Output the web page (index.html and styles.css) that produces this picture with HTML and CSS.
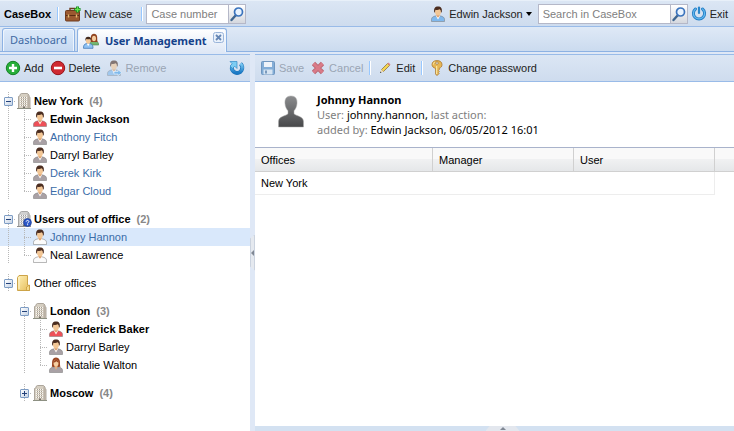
FILE: index.html
```html
<!DOCTYPE html>
<html lang="en">
<head>
<meta charset="utf-8">
<title>CaseBox - User Management</title>
<link rel="stylesheet" href="styles.css">
</head>
<body>
<svg class="defs" aria-hidden="true">
  <defs>
    <linearGradient id="gfloor" x2="0" y2="1"><stop offset="0" stop-color="#8b8c8e"/><stop offset="1" stop-color="#47484a"/></linearGradient>
    <linearGradient id="gfolder" x2="1" y2="1"><stop offset="0" stop-color="#fff0b5"/><stop offset="1" stop-color="#e5bd5a"/></linearGradient>
    <linearGradient id="gblue" x2="0" y2="1"><stop offset="0" stop-color="#7ccbf5"/><stop offset="1" stop-color="#1878c4"/></linearGradient>
  </defs>
  <symbol id="person" viewBox="0 0 16 16">
    <path d="M1.500 15.500v-2.200c0-2 1.700-2.800 4.500-3.500h4c2.800.7 4.500 1.500 4.500 3.500v2.200z" fill="currentColor" stroke="#777" stroke-opacity=".65" stroke-width=".8"/>
    <path d="M5.700 9.600 8 13.500l2.300-3.900z" fill="#fff"/>
    <path d="M6.500 8h3v2L8 11.800 6.500 10z" fill="#dda06d"/>
    <ellipse cx="8" cy="5.500" rx="3" ry="4" fill="#f3c796"/>
    <path d="M4.300 6.500C3.500 2.500 5 .6 8 .6s4.500 1.900 3.700 5.900l-.8-.3c.1-1.600-.5-2.500-1.300-2.900-1.200.7-3 .7-3.900.4-.6.700-.7 1.500-.6 2.500z" fill="#4b2d20"/>
  </symbol>
  <symbol id="woman" viewBox="0 0 16 16">
    <path d="M1.500 15.500v-2.200c0-2 1.700-2.800 4.500-3.500h4c2.800.7 4.500 1.500 4.500 3.500v2.200z" fill="currentColor" stroke="#777" stroke-opacity=".65" stroke-width=".8"/>
    <path d="M3.800 9.800c.5-2 .1-4.500.5-6C5 1.500 6.200.6 8 .6s3.200.9 3.800 3.200c.4 1.500-.1 4 .6 6l-2 .3H5.600z" fill="#9a4522"/>
    <path d="M6.500 8h3v2L8 13 6.500 10z" fill="#e5af80"/>
    <ellipse cx="8" cy="6" rx="2.500" ry="3.300" fill="#f6cfa2"/>
    <path d="M5.200 5.800c.2-2.200 1.500-3 3.500-3 1.400.4 2 1.500 2 3-1.200-.3-2-.9-2.400-1.500-.6.800-1.700 1.300-3.100 1.500z" fill="#9a4522"/>
  </symbol>
  <symbol id="building" viewBox="0 0 16 16">
    <path d="M2.500 15.500V3.500l1.500-.8V1.500L5.500.500h6L13 2v1.500l1 .7v11.300z" fill="#d6cfc2" stroke="#9d958a" stroke-width=".8"/>
    <path d="M11.500 1v14.200h2.200V4.400l-1-.7V2.200z" fill="#b9b0a4"/>
    <path d="M4 4.500h7M4 6.500h7M4 8.500h7M4 10.500h7M4 12.500h7" stroke="#faf8f4" stroke-dasharray="1 1"/>
    <path d="M5 4.500h6M5 6.500h6M5 8.500h6M5 10.500h6M5 12.500h6" stroke="#a69e92" stroke-dasharray="1 1"/>
    <path d="M7 13.500h2v2H7z" fill="#77716a"/>
    <path d="M1 15.500h14" stroke="#8d9082"/>
  </symbol>
  <symbol id="search" viewBox="0 0 16 16">
    <path d="m7 9-4.500 5" stroke="#3f6690" stroke-width="2.400" stroke-linecap="round"/>
    <circle cx="9.500" cy="6" r="4" fill="#e8f3ff" stroke="#3a73bd" stroke-width="1.700"/>
  </symbol>
</svg>

<div class="app">
  <header class="bar topbar">
    <strong class="brand">CaseBox</strong>
    <span class="sep"></span>
    <button class="btn new-case" type="button">
      <svg class="ico" viewBox="0 0 16 16"><path d="M5 5V2.500h5V5" fill="none" stroke="#6e3b1d" stroke-width="1.400"/><rect x=".5" y="4.500" width="14" height="10.500" rx="1" fill="#9b5930" stroke="#6e3b1d"/><path d="M1 9.500h13" stroke="#5b2d14"/><path d="M3.500 8.500v3M11.500 8.500v3" stroke="#e5bd75" stroke-width="1.400"/><path d="M12.500.5v6M9.500 3.500h6" stroke="#118a1c" stroke-width="3"/><path d="M12.500 1v5M10 3.500h5" stroke="#65e04e" stroke-width="1.300"/></svg>
      New case</button>
    <span class="sep"></span>
    <form class="search case-search">
      <input type="text" placeholder="Case number" aria-label="Case number">
      <button type="button" aria-label="Find case"><svg class="ico" viewBox="0 0 16 16"><use href="#search"/></svg></button>
    </form>
    <span class="fill"></span>
    <button class="btn account" type="button"><svg class="ico blue" viewBox="0 0 16 16"><use href="#person"/></svg>Edwin Jackson<i class="caret"></i></button>
    <form class="search box-search">
      <input type="text" placeholder="Search in CaseBox" aria-label="Search in CaseBox">
      <button type="button" aria-label="Search"><svg class="ico" viewBox="0 0 16 16"><use href="#search"/></svg></button>
    </form>
    <button class="btn exit" type="button">
      <svg class="ico" viewBox="0 0 16 16"><path d="M4.500 3a5.600 5.600 0 1 0 7 0" fill="none" stroke="#247ec5" stroke-width="3" stroke-linecap="round"/><path d="M4.500 3a5.600 5.600 0 1 0 7 0" fill="none" stroke="#62b8ef" stroke-width="1.200" stroke-linecap="round"/><path d="M8 1.500V7" stroke="#2987cb" stroke-width="2.200" stroke-linecap="round"/></svg>
      Exit</button>
  </header>

  <nav class="tabs">
    <a class="tab" href="#dashboard">Dashboard</a>
    <div class="tab active">
      <svg class="ico" viewBox="0 0 16 16"><path d="M6.500 12c0-3 1.500-4 4.500-4s4.700 1 4.700 4z" fill="#74b672" stroke="#467f49" stroke-width=".6"/><path d="M7.500 9c.5-1.500 0-4 .4-5.500C8.400 1.500 9.300.7 11 .7s2.700.8 3.100 2.800c.3 1.500-.1 4 .6 5.500z" fill="#914420"/><ellipse cx="11" cy="5.500" rx="2" ry="2.800" fill="#f6cda0"/><path d="M.5 15.300c0-3.500 1-4.800 4.700-4.800s4.800 1.300 4.800 4.800z" fill="#8fc2f3" stroke="#3f78b6" stroke-width=".8"/><path d="m3.700 10.500 1.500 2.700 1.500-2.700z" fill="#fff"/><ellipse cx="5.200" cy="7.500" rx="2.300" ry="3.200" fill="#f3c796"/><path d="M2.500 8C2 5 3 3.700 5.200 3.700S8.500 5 8 8l-.8-1.900c-1.200.4-2.500.3-3.800-.1z" fill="#40281d"/></svg>
      <a href="#users">User Management</a>
      <button class="close" type="button" aria-label="Close tab"><svg viewBox="0 0 11 11"><rect x=".5" y=".5" width="10" height="10" rx="2" fill="#e9f1fb" stroke="#9ab5da"/><path d="m3 3 5 5M8 3 3 8" stroke="#6586b4" stroke-width="1.800"/></svg></button>
    </div>
  </nav>

  <div class="work">
    <aside class="side">
      <div class="bar tools">
        <button class="btn" type="button"><svg class="ico" viewBox="0 0 16 16"><circle cx="8" cy="8" r="6.700" fill="#27ae39" stroke="#168227"/><path d="M8 4v8M4 8h8" stroke="#fff" stroke-width="2.400"/></svg>Add</button>
        <button class="btn" type="button"><svg class="ico" viewBox="0 0 16 16"><circle cx="8" cy="8" r="6.700" fill="#cf2a31" stroke="#96151b"/><path d="M4 8h8" stroke="#fff" stroke-width="2.600"/></svg>Delete</button>
        <button class="btn" type="button" disabled><svg class="ico blue" viewBox="0 0 16 16"><use href="#person"/><path d="M8 11.500h4V9.700l3.700 3-3.700 3V14H8z" fill="#4aa3ea" stroke="#fff" stroke-width=".6"/></svg>Remove</button>
        <span class="fill"></span>
        <button class="btn" type="button" aria-label="Refresh"><svg class="ico" viewBox="0 0 16 16"><path d="M11.500 3.800A5.200 5.200 0 1 1 3 6.500" fill="none" stroke="#1c70b5" stroke-width="4"/><path d="M11.500 3.800A5.200 5.200 0 1 1 3 6.500" fill="none" stroke="url(#gblue)" stroke-width="2.800"/><path d="M1 1.500h7v7L5.700 6.200 3.500 8.500 1 6l2.200-2.200z" fill="#7dcdf3" stroke="#3389c6" stroke-width=".7"/></svg></button>
      </div>
      <ul class="tree">
        <li class="group">
          <div class="row"><button class="cell toggle" type="button" aria-label="Collapse"><i class="minus"></i></button><svg class="ico"><use href="#building"/></svg><b>New York</b><b class="count">(4)</b></div>
          <ul>
            <li class="row"><i class="cell line"></i><i class="cell elbow"></i><svg class="ico red"><use href="#person"/></svg><b>Edwin Jackson</b></li>
            <li class="row"><i class="cell line"></i><i class="cell elbow"></i><svg class="ico gray"><use href="#person"/></svg><a href="#u">Anthony Fitch</a></li>
            <li class="row"><i class="cell line"></i><i class="cell elbow"></i><svg class="ico gray"><use href="#person"/></svg><span>Darryl Barley</span></li>
            <li class="row"><i class="cell line"></i><i class="cell elbow"></i><svg class="ico gray"><use href="#person"/></svg><a href="#u">Derek Kirk</a></li>
            <li class="row"><i class="cell line"></i><i class="cell elbow last"></i><svg class="ico gray"><use href="#person"/></svg><a href="#u">Edgar Cloud</a></li>
          </ul>
        </li>
        <li class="group">
          <div class="row"><button class="cell toggle" type="button" aria-label="Collapse"><i class="minus"></i></button><svg class="ico" viewBox="0 0 16 16"><g class="pale"><use href="#building"/></g><circle cx="11.500" cy="11.500" r="3.900" fill="#2c57c8" stroke="#183991" stroke-width=".7"/><path d="M10.200 10.700c0-1.800 2.700-1.600 2.700-.1 0 .9-1.300.8-1.300 1.900m0 .7v1" fill="none" stroke="#fff"/></svg><b>Users out of office</b><b class="count">(2)</b></div>
          <ul>
            <li class="row selected"><i class="cell line"></i><i class="cell elbow"></i><svg class="ico white"><use href="#person"/></svg><a href="#u">Johnny Hannon</a></li>
            <li class="row"><i class="cell line"></i><i class="cell elbow last"></i><svg class="ico white"><use href="#person"/></svg><span>Neal Lawrence</span></li>
          </ul>
        </li>
        <li class="group">
          <div class="row"><button class="cell toggle" type="button" aria-label="Collapse"><i class="minus"></i></button><svg class="ico" viewBox="0 0 16 16"><path d="M1.500 15V2.500L3 .5h8.500v9.500l2 .5v5h-12z" fill="url(#gfolder)" stroke="#cda449"/><path d="M10.500 15.500V12l3-2v5.500z" fill="#f8dc89" stroke="#c39538" stroke-width=".7"/><path d="M3 2v12" stroke="#fff6cf"/></svg><span>Other offices</span></div>
          <ul>
            <li class="group">
              <div class="row"><i class="cell"></i><button class="cell toggle" type="button" aria-label="Collapse"><i class="minus"></i></button><svg class="ico"><use href="#building"/></svg><b>London</b><b class="count">(3)</b></div>
              <ul>
                <li class="row"><i class="cell"></i><i class="cell line"></i><i class="cell elbow"></i><svg class="ico red"><use href="#person"/></svg><b>Frederick Baker</b></li>
                <li class="row"><i class="cell"></i><i class="cell line"></i><i class="cell elbow"></i><svg class="ico gray"><use href="#person"/></svg><span>Darryl Barley</span></li>
                <li class="row"><i class="cell"></i><i class="cell line"></i><i class="cell elbow last"></i><svg class="ico gray"><use href="#woman"/></svg><span>Natalie Walton</span></li>
              </ul>
            </li>
            <li class="group">
              <div class="row"><i class="cell"></i><button class="cell toggle" type="button" aria-label="Expand"><i class="minus plus"></i></button><svg class="ico"><use href="#building"/></svg><b>Moscow</b><b class="count">(4)</b></div>
            </li>
          </ul>
        </li>
      </ul>
    </aside>

    <div class="splitter"><button type="button" aria-label="Collapse panel"></button></div>

    <main class="main">
      <div class="bar tools">
        <button class="btn" type="button" disabled><svg class="ico" viewBox="0 0 16 16"><rect x="1.500" y="1.500" width="13" height="13" rx="1" fill="#4e8cc6" stroke="#2c659e"/><path d="M4 2h8v5H4z" fill="#fff"/><path d="M3.500 9.500h9v5h-9z" fill="#d9e8f4"/><path d="M5 10.500h2v3H5z" fill="#3e6c9c"/></svg>Save</button>
        <button class="btn" type="button" disabled><svg class="ico" viewBox="0 0 16 16"><path d="m3.500 3.500 9 9M12.500 3.500l-9 9" stroke="#a71922" stroke-width="4.600"/><path d="m3.500 3.500 9 9M12.500 3.500l-9 9" stroke="#de3742" stroke-width="3"/></svg>Cancel</button>
        <span class="sep"></span>
        <button class="btn" type="button"><svg class="ico" viewBox="0 0 16 16"><path d="m4.500 9.500 6-6 2 2-6 6z" fill="#f4d450" stroke="#7c693a" stroke-width=".7"/><path d="m10.500 3.500 1-1 2 2-1 1z" fill="#e28282"/><path d="M4.500 9.500 3.300 12.700l3.200-1.200z" fill="#f0d8ad"/><path d="m3 13 .5-1.500 1 1z" fill="#222"/></svg>Edit</button>
        <span class="sep"></span>
        <button class="btn" type="button"><svg class="ico" viewBox="0 0 16 16"><path fill-rule="evenodd" d="M8 .6c3 0 5 1.500 5 4 0 2-1 3-2.700 3.700v1.200l-1 1 1 1-1 1 .8 1L8 15.600l-1.400-1.500V8.400C4.500 7.700 3 6.600 3 4.600 3 2.100 5 .6 8 .6zM8 2a1.400 1.100 0 1 0 .01 0z" fill="#e6b655" stroke="#a9762d" stroke-width=".8"/><path d="M7.700 6v8M4.300 4.500C4.400 3 5 2.300 6 1.900" stroke="#fff0aa" fill="none"/></svg>Change password</button>
      </div>

      <section class="profile">
        <svg class="avatar" viewBox="0 0 28 34"><path d="M14 1c4.600 0 6.400 3 6 7.500-.3 3-1.300 5.500-3 7.300v3c2 2.200 9.500 2.500 9.500 7.700V32h-25v-5.500c0-5.200 7.500-5.500 9.500-7.700v-3c-1.700-1.800-2.700-4.300-3-7.300C7.600 4 9.400 1 14 1z" fill="url(#gfloor)" stroke="#aaa" stroke-width=".5"/></svg>
        <div class="about">
          <h1>Johnny Hannon</h1>
          <p>User: <span>johnny.hannon,</span> last action:</p>
          <p>added by: <span>Edwin Jackson, 06/05/2012 16:01</span></p>
        </div>
      </section>

      <table class="grid">
        <colgroup><col class="c1"><col class="c2"><col class="c2"><col></colgroup>
        <thead><tr><th>Offices</th><th>Manager</th><th>User</th><th></th></tr></thead>
        <tbody><tr><td>New York</td><td></td><td class="end"></td><td class="rest"></td></tr></tbody>
      </table>

      <div class="south"><button type="button" aria-label="Expand panel"></button></div>
    </main>
  </div>
</div>
</body>
</html>
```

FILE: styles.css
```css
* { box-sizing: border-box; }
body, ul, h1, p, form { margin: 0; padding: 0; }
body { font: 11px/18px "Liberation Sans", Arial, sans-serif; color: #000; background: #dfe8f6; }
ul { list-style: none; }
button, input { font: inherit; color: inherit; margin: 0; padding: 0; border: 0; background: none; }
a { color: inherit; text-decoration: none; }
.defs { position: absolute; width: 0; height: 0; }
.ico { display: block; flex: none; width: 16px; height: 16px; }
.fill { flex: 1; }
.blue { color: #80b9ee; }
.red { color: #ee5058; }
.gray { color: #a9a1a5; }
.white { color: #fbfbfb; }
.pale { filter: grayscale(1); }

.app { display: flex; flex-direction: column; height: 100vh; }

/* Toolbars */
.bar { display: flex; align-items: center; background: linear-gradient(#dbe6f4, #cedcee); border-bottom: 1px solid #99bbe8; white-space: nowrap; }
.btn { display: flex; align-items: center; gap: 3px; color: #222; }
.btn:disabled { color: #9aa5b4; }
.btn:disabled .ico { opacity: .6; }
.sep { width: 2px; height: 14px; border-left: 1px solid #98c8ff; background: #fff; }
.topbar { height: 27px; padding: 0 6px 0 4px; border-top: 1px solid #e8f0f9; }
.brand { margin-right: 6px; }
.new-case { margin: 0 9px 0 6px; }
.account { margin-right: 6px; }
.exit { margin-left: 3px; }
.caret { border: 3px solid transparent; border-top: 4px solid #000; border-bottom: 0; }

.search { display: flex; height: 20px; border: 1px solid #b5b8c8; background: #fff; }
.search input { min-width: 0; flex: 1; padding: 0 4px; outline: 0; }
.search input::placeholder { color: gray; opacity: 1; }
.search button { width: 17px; border-left: 1px solid #b5b8c8; background: linear-gradient(#fff, #d5d8de); }
.case-search { width: 100px; margin-left: 3px; }
.box-search { width: 150px; }

/* Tabs */
.tabs { display: flex; align-items: flex-end; gap: 2px; height: 25px; padding: 0 2px; background: linear-gradient(#dfe9f6, #cbdbef); border-bottom: 1px solid #8db2e3; font: 11px/16px "Noto Sans", Tahoma, sans-serif; }
.tab { display: flex; align-items: center; height: 23px; padding: 0 7px; border: 1px solid #8db2e3; border-bottom: 0; border-radius: 3px 3px 0 0; background: linear-gradient(#dceafb, #c6d9f1); color: #416aa3; box-shadow: inset 1px 1px #eef5fd, inset -1px 0 #eef5fd; }
.tab.active { height: 24px; margin-bottom: -1px; padding: 0 2px 0 5px; gap: 6px; background: linear-gradient(#fff, #dfe8f6); color: #15428b; font-weight: bold; }
.close { width: 11px; height: 11px; align-self: flex-start; margin-top: 3px; }
.close svg { display: block; }

/* Work area */
.work { flex: 1; display: flex; min-height: 0; padding-top: 2px; }
.side { flex: 0 0 250px; display: flex; flex-direction: column; background: #fff; }
.tools { height: 28px; flex: none; border-top: 1px solid #99bbe8; padding: 0 5px; gap: 6px; }
.main { flex: 1; min-width: 0; display: flex; flex-direction: column; background: #fff; }

/* Tree */
.tree { padding-top: 10px; }
.group + .group, .group .group { margin-top: 10px; }
.row { display: flex; align-items: center; height: 18px; white-space: nowrap; }
.row .ico { margin-right: 2px; }
.row a { color: #3a6ca8; }
.selected { background: #d9e8fb; }
.count { margin-left: 6px; color: #888; }
.cell { flex: none; width: 16px; height: 18px; background-repeat: no-repeat; }
.line { background-image: repeating-linear-gradient(#b8b8b8 0 1px, transparent 1px 2px); background-size: 1px 18px; background-position: 8px 0; }
.elbow { background-image: repeating-linear-gradient(#b8b8b8 0 1px, transparent 1px 2px), repeating-linear-gradient(90deg, #b8b8b8 0 1px, transparent 1px 2px); background-size: 1px 18px, 7px 1px; background-position: 8px 0, 8px 9px; }
.elbow.last { background-size: 1px 9px, 7px 1px; }
.toggle { display: flex; align-items: center; justify-content: center; background-image: repeating-linear-gradient(#b8b8b8 0 1px, transparent 1px 2px), repeating-linear-gradient(90deg, #b8b8b8 0 1px, transparent 1px 2px); background-size: 1px 18px, 8px 1px; background-position: 8px 0, 8px 9px; }
.minus { width: 9px; height: 9px; margin-left: 1px; border: 1px solid #7d9cc4; border-radius: 1px; background: linear-gradient(#24427a, #24427a) center / 5px 1px no-repeat, linear-gradient(135deg, #fff, #c5d3e6); }
.plus { background: linear-gradient(#24427a, #24427a) center / 5px 1px no-repeat, linear-gradient(#24427a, #24427a) center / 1px 5px no-repeat, linear-gradient(135deg, #fff, #c5d3e6); }

/* Collapsible edges */
.splitter { flex: 0 0 5px; display: flex; align-items: center; padding-top: 20px; }
.splitter button { display: flex; align-items: center; justify-content: center; width: 5px; height: 36px; border: 1px solid #cbd3df; background: #e5e9ef; clip-path: polygon(0 4px, 100% 0, 100% 100%, 0 32px); }
.splitter button::before { content: ""; border: 3px solid transparent; border-right-color: #808894; border-left: 0; }
.south { flex: 0 0 5px; display: flex; justify-content: center; margin-top: auto; padding-left: 16px; background: #d3e1f1; }
.south button { display: flex; align-items: center; justify-content: center; width: 34px; height: 5px; background: #e3e7ee; clip-path: polygon(4px 0, 30px 0, 100% 100%, 0 100%); }
.south button::before { content: ""; border: 3px solid transparent; border-bottom-color: #808894; border-top: 0; }

/* Profile */
.profile { display: flex; gap: 12px; height: 65px; padding: 10px 22px 0; font: 11px/15px "Noto Sans", Tahoma, sans-serif; color: #808080; }
.avatar { width: 28px; height: 34px; margin-top: 3px; }
.about h1 { font-size: 11px; line-height: 15px; color: #000; }
.about span { color: #000; }

/* Office grid */
.grid { width: 100%; table-layout: fixed; border-spacing: 0; border-top: 1px solid #a9b3cb; }
.c1 { width: 178px; }
.c2 { width: 141px; }
.grid th, .grid td { padding: 0 6px; text-align: left; font-weight: normal; }
.grid th { height: 24px; border-right: 1px solid #d0d0d0; border-bottom: 1px solid #d0d0d0; background: linear-gradient(#f9f9f9 50%, #f0f1f2 50%, #e5e7e9); }
.grid th:last-child { border-right: 0; }
.grid td { height: 23px; border-bottom: 1px solid #ededed; }
.grid .end { border-right: 1px solid #ededed; }
.grid .rest { border: 0; }
```
